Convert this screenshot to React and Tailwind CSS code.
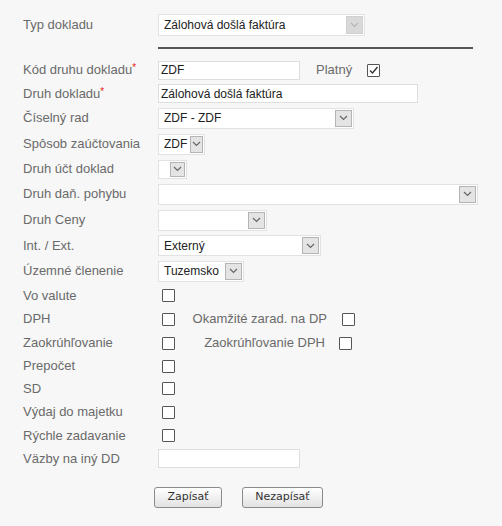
import React from "react";

const Chevron = ({ light }) => (
  <svg width="9" height="6" viewBox="0 0 9 6" fill="none">
    <path
      d="M1 1l3.5 3.5L8 1"
      stroke={light ? "#b5b5b5" : "#666"}
      strokeWidth="1.2"
    />
  </svg>
);

const Select = ({ w, value, h = "h-[21px]", aw = "w-[17px]", disabled }) => (
  <div
    className={`${w} ${h} flex items-stretch bg-white border border-[#e2e2e2]`}
  >
    <div className="flex-1 flex items-center pl-[5px] text-[12px] text-[#222] overflow-hidden whitespace-nowrap">
      {value}
    </div>
    <div
      className={`${aw} shrink-0 m-px flex items-center justify-center border ${
        disabled
          ? "bg-[#d9d9d9] border-[#d0d0d0]"
          : "bg-[#e4e4e4] border-[#b4b4b4]"
      }`}
    >
      <Chevron light={disabled} />
    </div>
  </div>
);

const Input = ({ w, value }) => (
  <div
    className={`${w} h-[19px] flex items-center bg-white border border-[#dedede] pl-[2px] text-[12px] text-[#222] whitespace-nowrap`}
  >
    {value}
  </div>
);

const Check = ({ checked, className = "" }) => (
  <div
    className={`w-[13px] h-[13px] border border-[#555] bg-white rounded-[1px] flex items-center justify-center ${className}`}
  >
    {checked && (
      <svg width="11" height="11" viewBox="0 0 11 11" fill="none">
        <path d="M2 5.5l2.5 2.5L9.5 2" stroke="#333" strokeWidth="1.4" />
      </svg>
    )}
  </div>
);

const Row = ({ h, label, req, children }) => (
  <div className={`${h} flex items-center`}>
    <div className="w-[135px] shrink-0 text-[13px] text-[#6a6a6a] whitespace-nowrap">
      {label}
      {req && <span className="text-[#e22] text-[10px] align-top">*</span>}
    </div>
    <div className="flex items-center">{children}</div>
  </div>
);

export default function App() {
  return (
    <div
      className="w-[502px] h-[526px] bg-[#f7f7f7] pl-[23px] pt-[12px]"
      style={{ fontFamily: '"Liberation Sans", Arial, sans-serif' }}
    >
      <Row h="h-[26px]" label="Typ dokladu">
        <Select w="w-[207px]" h="h-[22px]" value="Zálohová došlá faktúra" disabled />
      </Row>
      <div className="h-[20px] pl-[135px] pt-[9px]">
        <div className="w-[315px] h-[2px] bg-[#555]" />
      </div>
      <Row h="h-[24px]" label="Kód druhu dokladu" req>
        <Input w="w-[142px]" value="ZDF" />
        <span className="ml-[16px] text-[13px] text-[#6a6a6a]">Platný</span>
        <Check checked className="ml-[15px]" />
      </Row>
      <Row h="h-[23px]" label="Druh dokladu" req>
        <Input w="w-[260px]" value="Zálohová došlá faktúra" />
      </Row>
      <Row h="h-[26px]" label="Číselný rad">
        <Select w="w-[196px]" value="ZDF - ZDF" />
      </Row>
      <Row h="h-[26px]" label="Spôsob zaúčtovania">
        <Select w="w-[47px]" aw="w-[13px]" value="ZDF" />
      </Row>
      <Row h="h-[24px]" label="Druh účt doklad">
        <Select w="w-[29px]" h="h-[19px]" aw="w-[15px]" value="" />
      </Row>
      <Row h="h-[26px]" label="Druh daň. pohybu">
        <Select w="w-[320px]" value="" />
      </Row>
      <Row h="h-[26px]" label="Druh Ceny">
        <Select w="w-[109px]" value="" />
      </Row>
      <Row h="h-[25px]" label="Int. / Ext.">
        <Select w="w-[163px]" value="Externý" />
      </Row>
      <Row h="h-[26px]" label="Územné členenie">
        <Select w="w-[86px]" value="Tuzemsko" />
      </Row>
      <Row h="h-[23px]" label="Vo valute">
        <Check className="ml-[4px]" />
      </Row>
      <Row h="h-[24px]" label="DPH">
        <Check className="ml-[4px]" />
        <span className="w-[152px] text-right text-[13px] text-[#6a6a6a] whitespace-nowrap">
          Okamžité zarad. na DP
        </span>
        <Check className="ml-[15px]" />
      </Row>
      <Row h="h-[24px]" label="Zaokrúhľovanie">
        <Check className="ml-[4px]" />
        <span className="w-[150px] text-right text-[13px] text-[#6a6a6a] whitespace-nowrap">
          Zaokrúhľovanie DPH
        </span>
        <Check className="ml-[14px]" />
      </Row>
      <Row h="h-[22px]" label="Prepočet">
        <Check className="ml-[4px]" />
      </Row>
      <Row h="h-[23px]" label="SD">
        <Check className="ml-[4px]" />
      </Row>
      <Row h="h-[24px]" label="Výdaj do majetku">
        <Check className="ml-[4px]" />
      </Row>
      <Row h="h-[23px]" label="Rýchle zadavanie">
        <Check className="ml-[4px]" />
      </Row>
      <Row h="h-[23px]" label="Väzby na iný DD">
        <Input w="w-[142px]" value="" />
      </Row>
      <div
        className="flex gap-[20px] pl-[131px] mt-[17px]"
        style={{ fontFamily: '"DejaVu Sans", Verdana, sans-serif' }}
      >
        <button className="w-[68px] h-[21px] border border-[#8a8a8a] rounded-[3px] bg-gradient-to-b from-white to-[#e2e2e2] text-[11px] text-[#333]">
          Zapísať
        </button>
        <button className="w-[81px] h-[21px] border border-[#8a8a8a] rounded-[3px] bg-gradient-to-b from-white to-[#e2e2e2] text-[11px] text-[#333]">
          Nezapísať
        </button>
      </div>
    </div>
  );
}
